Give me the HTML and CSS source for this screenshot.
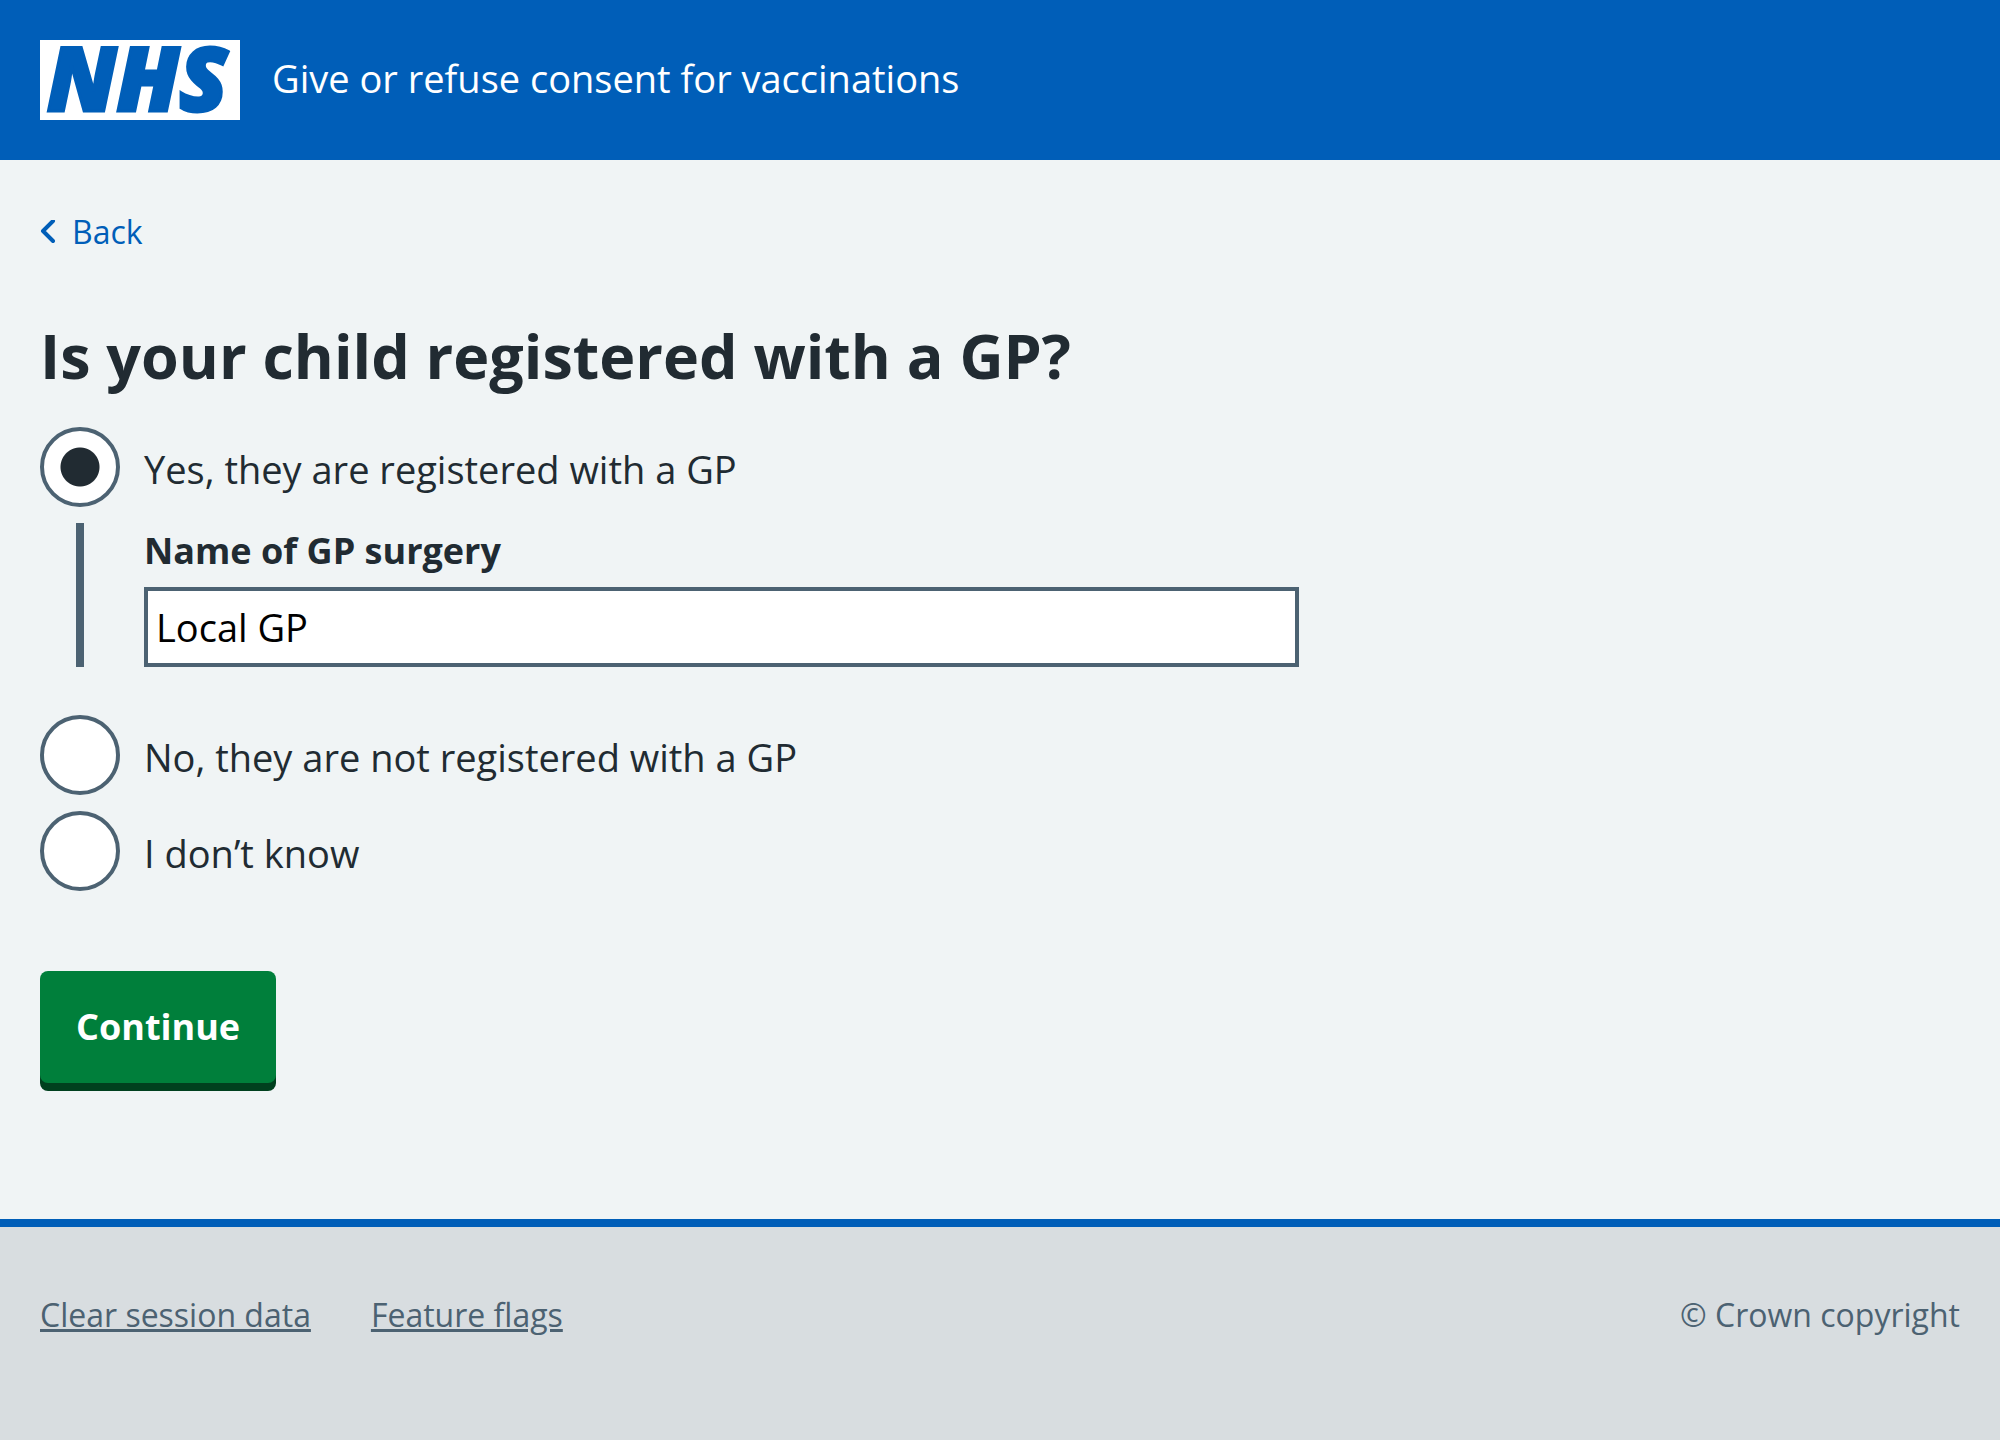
FILE: index.html
```html
<!DOCTYPE html>
<html lang="en">
<head>
  <meta charset="utf-8">
  <meta name="viewport" content="width=device-width, initial-scale=1">
  <title>Is your child registered with a GP?</title>
  <link rel="stylesheet" href="styles.css">
</head>
<body>
  <header class="header">
    <a class="header__link" href="#">
      <svg class="header__logo" viewBox="0 0 200 80" role="img" aria-label="NHS">
        <rect width="200" height="80" fill="#fff"/>
        <text class="header__logo-text" x="7" y="71">NHS</text>
      </svg>
      <span class="header__service">Give or refuse consent for vaccinations</span>
    </a>
  </header>

  <div class="page">
    <a class="back-link" href="#">
      <svg class="back-link__icon" viewBox="0 0 16 24" aria-hidden="true">
        <path d="M13 1 3 11l10 10" fill="none" stroke="currentColor" stroke-width="4" stroke-linecap="round" stroke-linejoin="round"/>
      </svg>
      <span>Back</span>
    </a>

    <main class="row">
      <form class="column" action="#" method="post">
        <fieldset class="fieldset">
          <legend class="fieldset__legend">
            <h1 class="heading">Is your child registered with a GP?</h1>
          </legend>
          <div class="radios">
            <div class="radios__item">
              <input class="radios__input" type="radio" id="gp-yes" name="gp" value="yes" checked>
              <label class="radios__label" for="gp-yes">Yes, they are registered with a GP</label>
            </div>
            <div class="radios__conditional">
              <label class="label" for="gp-name">Name of GP surgery</label>
              <input class="input" type="text" id="gp-name" name="gp-name" value="Local GP">
            </div>
            <div class="radios__item">
              <input class="radios__input" type="radio" id="gp-no" name="gp" value="no">
              <label class="radios__label" for="gp-no">No, they are not registered with a GP</label>
            </div>
            <div class="radios__item">
              <input class="radios__input" type="radio" id="gp-unknown" name="gp" value="unknown">
              <label class="radios__label" for="gp-unknown">I don’t know</label>
            </div>
          </div>
        </fieldset>
        <button class="button" type="submit">Continue</button>
      </form>
    </main>
  </div>

  <footer class="footer">
    <ul class="footer__list">
      <li><a class="footer__link" href="#">Clear session data</a></li>
      <li><a class="footer__link" href="#">Feature flags</a></li>
    </ul>
    <p class="footer__copyright">© Crown copyright</p>
  </footer>
</body>
</html>
```

FILE: styles.css
```css
*,
*::before,
*::after {
  box-sizing: border-box;
}

body {
  display: flex;
  flex-direction: column;
  min-height: 100vh;
  margin: 0;
  background: #f0f4f5;
  color: #212b32;
  font-family: "Open Sans", "Noto Sans", sans-serif;
  font-size: 38px;
  line-height: 56px;
}

.header {
  padding: 40px;
  background: #005eb8;
}

.header__link {
  display: inline-flex;
  align-items: center;
  gap: 32px;
  color: #fff;
  text-decoration: none;
  vertical-align: top;
}

.header__logo {
  flex: none;
  width: 200px;
  height: 80px;
  overflow: visible;
}

.header__logo-text {
  fill: #005eb8;
  stroke: #005eb8;
  stroke-width: 3px;
  font-family: "Open Sans", "Noto Sans", sans-serif;
  font-size: 88px;
  font-style: italic;
  font-weight: 800;
}

.header__service {
  padding-bottom: 4px;
}

.page {
  padding: 48px 40px 128px;
}

.back-link {
  display: inline-flex;
  align-items: center;
  gap: 16px;
  color: #005eb8;
  font-size: 32px;
  line-height: 48px;
  text-decoration: none;
  vertical-align: top;
}

.back-link__icon {
  width: 16px;
  height: 24px;
}

.row {
  display: flex;
  margin: 56px -32px 0;
}

.column {
  width: 66.6667%;
  padding: 0 32px;
}

.fieldset {
  min-width: 0;
  margin: 0;
  padding: 0;
  border: 0;
}

.fieldset__legend {
  padding: 0;
}

.heading {
  margin: 0;
  font-size: 61px;
  font-weight: 700;
  line-height: 71px;
}

.radios {
  display: flex;
  flex-direction: column;
  gap: 16px;
  margin-top: 36px;
}

.radios__item {
  display: flex;
  align-items: center;
  gap: 24px;
}

.radios__input {
  flex: none;
  width: 80px;
  height: 80px;
  margin: 0;
  appearance: none;
  border: 4px solid #4c6272;
  border-radius: 50%;
  background: #fff;
}

.radios__input:checked {
  background: radial-gradient(circle, #212b32 19px, #fff 20px);
}

.radios__label {
  padding-top: 4px;
}

.radios__conditional {
  display: flex;
  flex-direction: column;
  gap: 8px;
  margin: 0 0 32px 36px;
  padding-left: 60px;
  border-left: 8px solid #4c6272;
}

.label {
  font-size: 36px;
  font-weight: 700;
}

.input {
  width: 100%;
  height: 80px;
  padding: 8px;
  border: 4px solid #4c6272;
  border-radius: 0;
  background: #fff;
  color: #000;
  font: inherit;
}

.button {
  display: block;
  margin: 80px 0 8px;
  padding: 28px 36px;
  border: 0;
  border-radius: 8px;
  background: #007f3b;
  box-shadow: 0 8px 0 #00401e;
  color: #fff;
  font: inherit;
  font-size: 36px;
  font-weight: 700;
}

.footer {
  display: flex;
  flex: 1;
  align-items: flex-start;
  justify-content: space-between;
  padding: 64px 40px;
  border-top: 8px solid #005eb8;
  background: #d8dde0;
  color: #4c6272;
  font-size: 32px;
  line-height: 48px;
}

.footer__list {
  display: flex;
  gap: 60px;
  margin: 0;
  padding: 0;
  list-style: none;
}

.footer__link {
  color: inherit;
  text-decoration-thickness: 3px;
}

.footer__copyright {
  margin: 0;
}
```
